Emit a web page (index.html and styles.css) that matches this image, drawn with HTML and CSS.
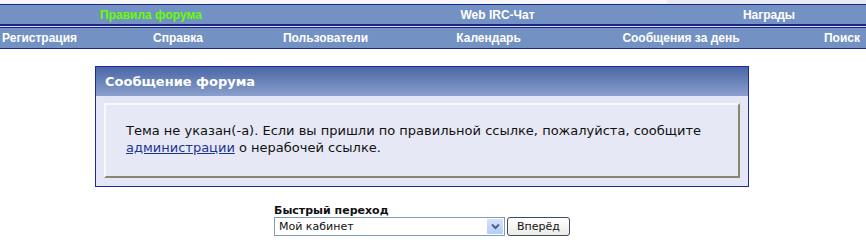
FILE: index.html
```html
<!DOCTYPE html>
<html lang="ru">
<head>
  <meta charset="UTF-8">
  <title>Сообщение форума</title>
  <link rel="stylesheet" href="styles.css">
</head>
<body>
  <div class="topstrip">
    <div class="topstrip-left"></div>
    <div class="topstrip-right"></div>
  </div>

  <div class="nav nav-top">
    <a href="#" class="rules">Правила форума</a>
    <a href="#">Web IRC-Чат</a>
    <a href="#">Награды</a>
    <span></span>
  </div>
  <div class="nav-gap"></div>
  <div class="nav nav-main">
    <a href="#" class="first">Регистрация</a>
    <a href="#">Справка</a>
    <a href="#">Пользователи</a>
    <a href="#">Календарь</a>
    <a href="#">Сообщения за день</a>
    <a href="#" class="last">Поиск</a>
  </div>

  <div class="msgbox">
    <div class="msgbox-head">Сообщение форума</div>
    <div class="msgbox-body">
      <div class="msgbox-text">
        Тема не указан(-а). Если вы пришли по правильной ссылке, пожалуйста, сообщите
        <a href="#">администрации</a> о нерабочей ссылке.
      </div>
    </div>
  </div>

  <div class="jump">
    <div class="jump-inner">
      <div class="jump-label">Быстрый переход</div>
      <div class="jump-row">
        <div class="select">
          <select>
            <option>Мой кабинет</option>
            <option>Поиск</option>
            <option>Справка</option>
          </select>
          <span class="select-arrow">
            <svg width="9" height="7" viewBox="0 0 9 7"><path d="M1 1.5 L4.5 5 L8 1.5" fill="none" stroke="#4d6185" stroke-width="2"/></svg>
          </span>
        </div>
        <button>Вперёд</button>
      </div>
    </div>
  </div>
</body>
</html>
```

FILE: styles.css
```css
body {
  margin: 0;
  background: #fff;
  font-family: "DejaVu Sans", Verdana, sans-serif;
  color: #111;
}
.topstrip { display: flex; height: 4px; }
.topstrip-left { width: 667px; background: #f6f6fa; }
.topstrip-right { flex: 1; background: #e8ebf3; }

.nav {
  display: grid;
  align-items: center;
  background: #7491c3;
  font-family: "Liberation Sans", Arial, sans-serif;
  font-weight: bold;
  font-size: 12px;
}
.nav a { color: #fff; text-decoration: none; text-align: center; white-space: nowrap; }
.nav-top {
  grid-template-columns: 302px 391px 152px 1fr;
  height: 19px;
  border-top: 1px solid #1a2787;
  border-bottom: 2px solid #1a2787;
}
.nav-top .rules { color: #66ff00; }
.nav-gap { height: 1px; background: #d6dcee; }
.nav-main {
  grid-template-columns: 100px 156px 139px 187px 198px 86px;
  height: 20px;
  border-top: 1px solid #1a2787;
  border-bottom: 1px solid #1a2787;
}
.nav-main .first { text-align: left; padding-left: 2px; }
.nav-main .last { text-align: right; padding-right: 6px; }

.msgbox {
  width: 652px;
  margin: 17px 0 0 95px;
  border: 1px solid #1f2aa0;
}
.msgbox-head {
  height: 29px;
  line-height: 29px;
  padding-left: 9px;
  background: linear-gradient(#4a66a6, #8a9fcc);
  color: #fff;
  font-weight: bold;
  font-size: 13px;
}
.msgbox-body {
  background: #e3e6f4;
  padding: 7px 8px 8px;
}
.msgbox-text {
  background: #e6e8f5;
  border-top: 2px solid #f8f8fc;
  border-left: 2px solid #f8f8fc;
  border-right: 2px solid #8a8672;
  border-bottom: 2px solid #8a8672;
  padding: 17px 20px 20px;
  font-size: 13px;
  line-height: 17px;
}
.msgbox-text a { color: #1e3592; }

.jump { width: 654px; margin: 17px 0 0 95px; display: flex; justify-content: center; }
.jump-label { font-weight: bold; font-size: 11px; line-height: 13px; color: #111; }
.jump-row { display: flex; gap: 2px; }
.select {
  display: flex;
  width: 229px;
  height: 17px;
  border: 1px solid #7f9db9;
  background: #fff;
}
.select select {
  flex: 1;
  appearance: none;
  border: none;
  background: transparent;
  font-family: "DejaVu Sans", Verdana, sans-serif;
  font-size: 11px;
  padding: 0 0 0 4px;
  color: #111;
  outline: none;
}
.select-arrow {
  width: 16px;
  margin: 1px;
  display: flex;
  align-items: center;
  justify-content: center;
  background: linear-gradient(#d7e3fb, #b6cbf5);
  border-radius: 1px;
}
button {
  width: 63px;
  height: 19px;
  padding: 0;
  border: 1px solid #3b4b66;
  border-radius: 3px;
  background: linear-gradient(#ffffff, #ecebe4);
  font-family: "DejaVu Sans", Verdana, sans-serif;
  font-size: 11px;
  color: #111;
  cursor: pointer;
}
```
